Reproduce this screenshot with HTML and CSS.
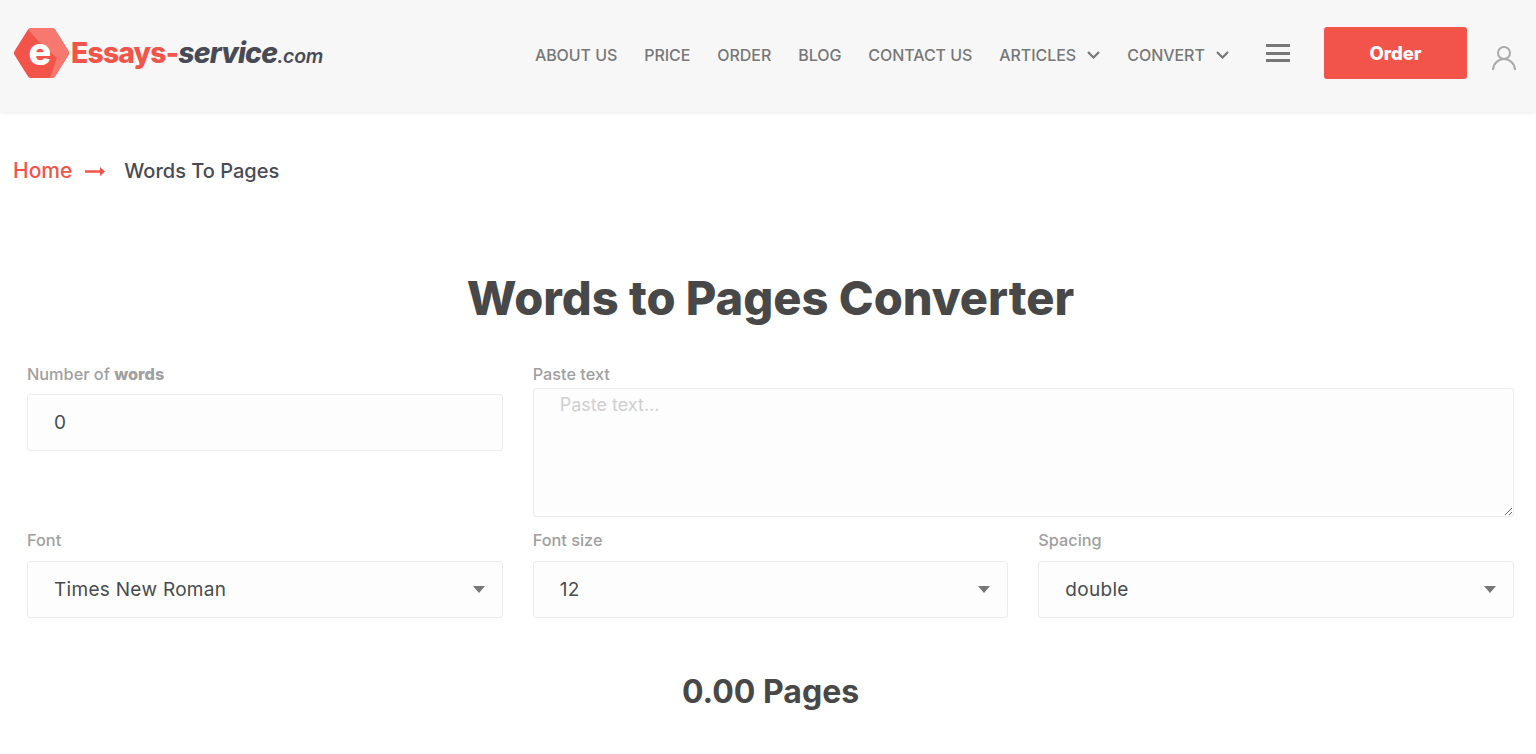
FILE: index.html
```html
<!doctype html>
<html lang="en">
<head>
  <meta charset="utf-8">
  <meta name="viewport" content="width=device-width, initial-scale=1.0">
  <title>Words to Pages Converter</title>
  <link rel="stylesheet" href="styles.css">
</head>
<body>

<header class="site-header">
  <a class="logo" href="#">
    <svg class="logo-mark" width="57" height="50" viewBox="0 0 57 50">
      <path d="M15 1.5Q16 0 18 0H39Q41 0 42 1.5L55.500 23Q57 25 55.500 27L42 48.500Q41 50 39 50H18Q16 50 15 48.500L1.500 27Q0 25 1.500 23Z" fill="#f2544a"/>
      <path d="M15 1.500Q16 0 18 0H39Q41 0 42 1.500L55.500 23Q57 25 55.500 27L42 48.500Q41 50 39 50H37L44 30L30 18Z" fill="#f6786f"/>
      <text x="27" y="37" text-anchor="middle" class="logo-e">e</text>
    </svg>
    <span class="logo-text"><span class="logo-red">Essays-</span><span class="logo-dark">service</span><span class="logo-com">.com</span></span>
  </a>

  <nav class="main-nav">
    <a href="#">About us</a>
    <a href="#">Price</a>
    <a href="#">Order</a>
    <a href="#">Blog</a>
    <a href="#">Contact us</a>
    <a href="#" class="has-sub">Articles
      <svg width="13" height="8" viewBox="0 0 13 8"><path d="M1 1l5.500 5.500L12 1" fill="none" stroke="#777" stroke-width="2.200"/></svg>
    </a>
    <a href="#" class="has-sub">Convert
      <svg width="13" height="8" viewBox="0 0 13 8"><path d="M1 1l5.500 5.500L12 1" fill="none" stroke="#777" stroke-width="2.200"/></svg>
    </a>
  </nav>

  <div class="burger"><span></span><span></span><span></span></div>
  <a class="order-btn" href="#">Order</a>
  <svg class="user-icon" width="26" height="26" viewBox="0 0 26 26">
    <circle cx="13" cy="8" r="6" fill="none" stroke="#aaa" stroke-width="2"/>
    <path d="M2 25c0-6 5-11 11-11s11 5 11 11" fill="none" stroke="#aaa" stroke-width="2"/>
  </svg>
</header>

<div class="breadcrumb">
  <a href="#">Home</a>
  <svg width="20" height="9" viewBox="0 0 20 9"><path d="M0 3.200h15V0l5 4.500-5 4.500V5.800H0z" fill="#f2544a"/></svg>
  <span>Words To Pages</span>
</div>

<h1>Words to Pages Converter</h1>

<form class="converter">
  <div class="field field-words">
    <label for="words">Number of <b>words</b></label>
    <input type="text" id="words" value="0">
  </div>
  <div class="field field-paste">
    <label for="paste">Paste text</label>
    <textarea id="paste" placeholder="Paste text..."></textarea>
  </div>
  <div class="field">
    <label for="font">Font</label>
    <div class="select-wrap">
      <select id="font"><option>Times New Roman</option><option>Arial</option></select>
    </div>
  </div>
  <div class="field">
    <label for="size">Font size</label>
    <div class="select-wrap">
      <select id="size"><option>12</option><option>14</option></select>
    </div>
  </div>
  <div class="field">
    <label for="spacing">Spacing</label>
    <div class="select-wrap">
      <select id="spacing"><option>double</option><option>single</option></select>
    </div>
  </div>
</form>

<div class="result">0.00 Pages</div>

</body>
</html>
```

FILE: styles.css
```css
html, body {
  height: 100%;
  overflow: hidden;
}

body {
  margin: 0;
  font-family: "Inter", "Open Sans", sans-serif;
  color: #484b50;
  background: #fff;
}

a {
  text-decoration: none;
}

.site-header {
  display: flex;
  align-items: center;
  height: 112px;
  padding: 0 19px 0 13px;
  box-sizing: border-box;
  background: #f7f7f7;
  box-shadow: 0 1px 4px rgba(0, 0, 0, 0.08);
}

.logo {
  display: flex;
  align-items: center;
  margin-bottom: 6px;
}

.logo-mark {
  display: block;
  flex: none;
}

.logo-e {
  font-family: "Inter", sans-serif;
  font-weight: 800;
  font-size: 38px;
  fill: #fff;
}

.logo-text {
  margin-left: 1px;
  font-family: "Inter", sans-serif;
  font-weight: 800;
  font-size: 28.3px;
  letter-spacing: -0.8px;
  white-space: nowrap;
}

.logo-red {
  color: #f2544a;
}

.logo-dark {
  color: #484b55;
  font-style: italic;
}

.logo-com {
  color: #484b55;
  font-style: italic;
  font-weight: 600;
  font-size: 19.5px;
  letter-spacing: -0.3px;
}

.main-nav {
  display: flex;
  align-items: center;
  gap: 27px;
  margin-left: auto;
  margin-bottom: 2px;
}

.main-nav a {
  color: #777;
  font-size: 16px;
  font-weight: 500;
  letter-spacing: -0.06px;
  text-transform: uppercase;
  white-space: nowrap;
}

.has-sub svg {
  margin-left: 7px;
  vertical-align: 2px;
}

.burger {
  display: flex;
  flex-direction: column;
  gap: 4.5px;
  width: 24px;
  margin-left: 37px;
  margin-bottom: 6px;
}

.burger span {
  height: 3px;
  background: #777;
}

.order-btn {
  display: flex;
  align-items: center;
  justify-content: center;
  width: 143px;
  height: 52px;
  margin-left: 34px;
  margin-bottom: 6px;
  border-radius: 3px;
  background: #f2544a;
  color: #fff;
  font-size: 18.5px;
  font-weight: 800;
}

.user-icon {
  margin-left: 24px;
  margin-top: 4px;
}

.breadcrumb {
  display: flex;
  align-items: center;
  padding: 47px 13px 0;
  font-size: 20px;
  font-weight: 500;
  line-height: 24px;
  color: #484b55;
}

.breadcrumb a {
  color: #f2544a;
  font-size: 21px;
}

.breadcrumb svg {
  margin: 0 19px 0 13px;
}

h1 {
  margin: 87px 0 0;
  padding-left: 5px;
  font-size: 47px;
  font-weight: 800;
  line-height: 56px;
  text-align: center;
  color: #484848;
}

.converter {
  display: grid;
  grid-template-columns: repeat(3, 1fr);
  column-gap: 30px;
  row-gap: 14px;
  padding: 0 22px 0 27px;
  margin-top: 39px;
}

.field label {
  display: block;
  color: #a0a0a0;
  font-size: 16.3px;
  font-weight: 500;
  line-height: 18px;
}

.field b {
  font-weight: 800;
}

.field-words label {
  margin-bottom: 11px;
}

.field-paste {
  grid-column: span 2;
}

.field-paste label {
  margin-bottom: 5px;
}

input,
select,
textarea {
  display: block;
  width: 100%;
  box-sizing: border-box;
  border: 1px solid #ececec;
  border-radius: 3px;
  background: #fdfdfd;
  color: #484b50;
  font-family: "Inter", sans-serif;
  font-size: 19px;
  letter-spacing: 0.3px;
  outline: none;
}

input,
select {
  height: 57px;
  padding: 0 26px;
}

textarea {
  height: 129px;
  padding: 5px 26px;
  font-size: 18px;
  letter-spacing: 0;
  resize: vertical;
}

textarea::placeholder {
  color: #cfcfcf;
  opacity: 1;
}

select {
  appearance: none;
}

.select-wrap {
  position: relative;
  margin-top: 12px;
}

.select-wrap::after {
  content: "";
  position: absolute;
  top: 25px;
  right: 18px;
  border-left: 6px solid transparent;
  border-right: 6px solid transparent;
  border-top: 7px solid #777;
}

.result {
  margin-top: 56px;
  padding-left: 5px;
  font-size: 32px;
  font-weight: 700;
  line-height: 36px;
  text-align: center;
  color: #484848;
}
```
